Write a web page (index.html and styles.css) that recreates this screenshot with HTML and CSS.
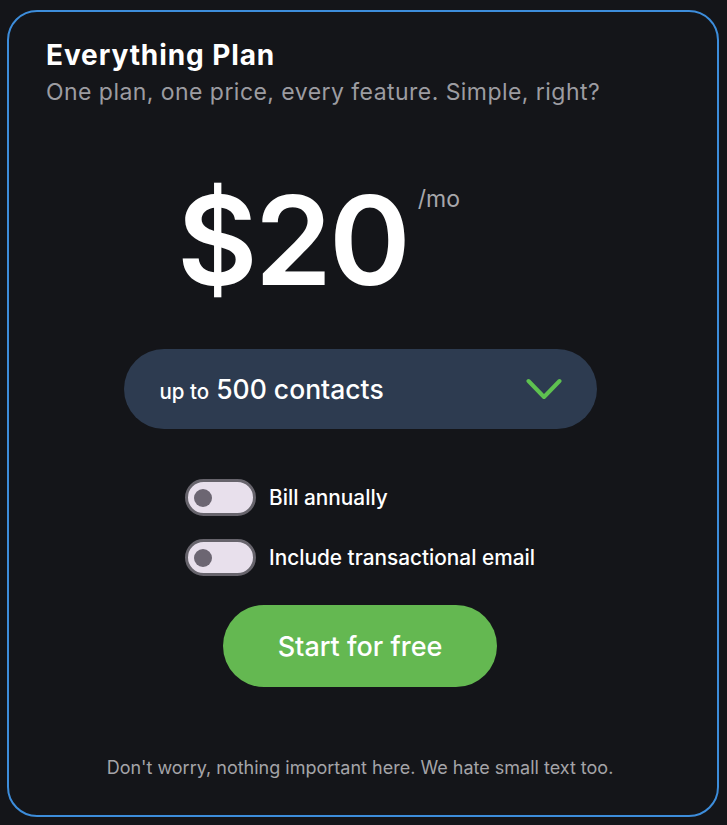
FILE: index.html
```html
<!DOCTYPE html>
<html lang="en">
<head>
<meta charset="utf-8">
<title>Everything Plan</title>
<link rel="stylesheet" href="styles.css">
</head>
<body>
<div class="card">
  <h1 class="title">Everything Plan</h1>
  <p class="subtitle">One plan, one price, every feature. Simple, right?</p>
  <div class="price">
    <span class="amount">$20</span>
    <span class="period">/mo</span>
  </div>
  <div class="select">
    <span class="select-text"><span class="small">up to</span> 500 contacts</span>
    <svg class="chevron" width="36" height="22" viewBox="0 0 36 22" aria-hidden="true">
      <polyline points="2.5,3 18,19 33.5,3" fill="none" stroke="#5ec150" stroke-width="4" stroke-linecap="round" stroke-linejoin="round"/>
    </svg>
  </div>
  <div class="options">
    <label class="option"><span class="toggle"><span class="knob"></span></span><span class="option-label">Bill annually</span></label>
    <label class="option"><span class="toggle"><span class="knob"></span></span><span class="option-label">Include transactional email</span></label>
  </div>
  <div class="cta-row">
    <button class="cta">Start for free</button>
  </div>
  <p class="footnote">Don't worry, nothing important here. We hate small text too.</p>
</div>
</body>
</html>
```
FILE: styles.css
```css
html, body {
  margin: 0;
  padding: 0;
  background: #141519;
}
body {
  font-family: Inter, "Noto Sans", "Liberation Sans", sans-serif;
  color: #ffffff;
  width: 727px;
  height: 825px;
  overflow: hidden;
}
.card {
  box-sizing: border-box;
  margin: 10px 8px 0 7px;
  height: 807px;
  border: 2px solid #3d8ddb;
  border-radius: 30px;
  background: #141519;
  padding: 27px 43px 0 37px;
  display: flex;
  flex-direction: column;
}
.title {
  margin: 0;
  font-size: 28px;
  line-height: 32px;
  font-weight: 700;
  letter-spacing: 0.9px;
  color: #ffffff;
}
.subtitle {
  margin: 7px 0 0;
  font-size: 23px;
  line-height: 28px;
  font-weight: 400;
  letter-spacing: 0.45px;
  color: #9c9ca1;
}
.price {
  margin-top: 72px;
  display: flex;
  align-items: flex-start;
  padding-left: 131px;
}
.amount {
  font-size: 124px;
  line-height: 124px;
  font-weight: 600;
  letter-spacing: -3px;
}
.period {
  margin-left: 10px;
  margin-top: 7px;
  font-size: 23px;
  line-height: 28px;
  color: #a7a7ab;
}
.select {
  margin: 47px auto 0;
  box-sizing: border-box;
  width: 473px;
  height: 80px;
  border-radius: 40px;
  background: #2d3b50;
  display: flex;
  align-items: center;
  justify-content: space-between;
  padding: 3px 35px 0 36px;
}
.select-text {
  font-size: 26.5px;
  line-height: 32px;
  font-weight: 500;
  color: #ffffff;
}
.select-text .small {
  font-size: 20.5px;
}
.chevron {
  display: block;
  margin-top: -3px;
}
.options {
  margin-top: 50px;
  align-self: center;
  display: flex;
  flex-direction: column;
  gap: 23px;
}
.option {
  display: flex;
  align-items: center;
  gap: 13px;
  white-space: nowrap;
}
.toggle {
  box-sizing: border-box;
  flex: none;
  width: 71px;
  height: 37px;
  border-radius: 19px;
  border: 3px solid #67646c;
  background: #e8e0ec;
  display: flex;
  align-items: center;
  padding-left: 6px;
}
.knob {
  width: 18px;
  height: 18px;
  border-radius: 50%;
  background: #6c6672;
}
.option-label {
  font-size: 20.8px;
  line-height: 26px;
  font-weight: 500;
  color: #ffffff;
}
.cta-row {
  margin-top: 29px;
  display: flex;
  justify-content: center;
}
.cta {
  width: 274px;
  height: 82px;
  border: none;
  border-radius: 41px;
  background: #64b851;
  color: #ffffff;
  font-family: inherit;
  font-size: 27px;
  font-weight: 500;
  padding: 0;
}
.footnote {
  margin: 70px 0 0;
  text-align: center;
  font-size: 18px;
  line-height: 22px;
  color: #a4a4a8;
}
```
